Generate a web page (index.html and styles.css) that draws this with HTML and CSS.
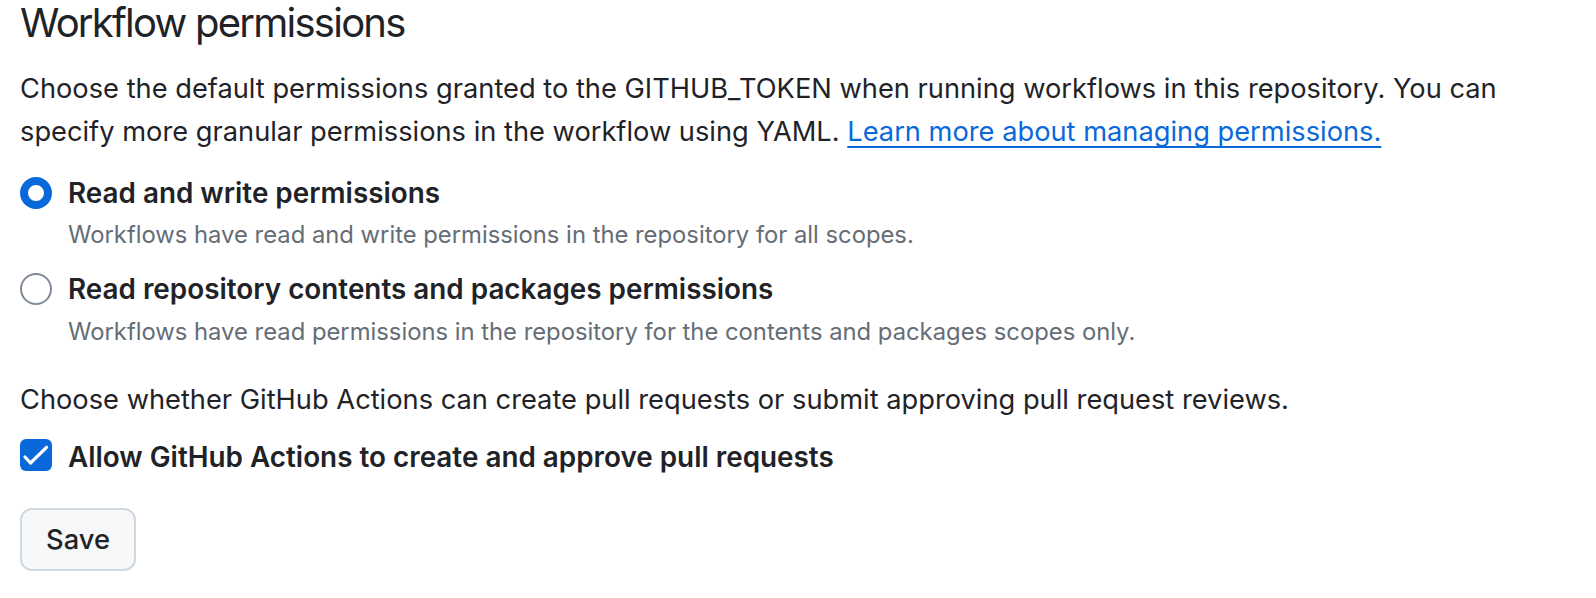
FILE: index.html
```html
<!DOCTYPE html>
<html lang="en">
<head>
<meta charset="utf-8">
<title>Workflow permissions</title>
<link rel="stylesheet" href="styles.css">
</head>
<body>
<main class="settings">
  <h2 class="heading">Workflow permissions</h2>
  <p class="lead">Choose the default permissions granted to the GITHUB_TOKEN when running workflows in this repository. You can specify more granular permissions in the workflow using YAML. <a class="link" href="#">Learn more about managing permissions.</a></p>

  <div class="choices">
    <label class="choice">
      <span class="radio radio-checked"></span>
      <span class="choice-body">
        <span class="choice-title">Read and write permissions</span>
        <span class="choice-note">Workflows have read and write permissions in the repository for all scopes.</span>
      </span>
    </label>
    <label class="choice">
      <span class="radio"></span>
      <span class="choice-body">
        <span class="choice-title">Read repository contents and packages permissions</span>
        <span class="choice-note">Workflows have read permissions in the repository for the contents and packages scopes only.</span>
      </span>
    </label>
  </div>

  <p class="lead second">Choose whether GitHub Actions can create pull requests or submit approving pull request reviews.</p>

  <label class="check-row">
    <span class="checkbox">
      <svg viewBox="0 0 32 32" width="32" height="32" aria-hidden="true"><path d="M5 18 L10.5 24 L26.5 8.3" fill="none" stroke="#ffffff" stroke-width="3.2" stroke-linecap="round" stroke-linejoin="round"/></svg>
    </span>
    <span class="choice-title">Allow GitHub Actions to create and approve pull requests</span>
  </label>

  <button class="btn" type="button">Save</button>
</main>
</body>
</html>
```
FILE: styles.css
```css
html, body {
  margin: 0;
  padding: 0;
  background: #ffffff;
}

body {
  font-family: Inter, "Liberation Sans", sans-serif;
  color: #1f2328;
}

.settings {
  padding: 0 20px;
  display: flex;
  flex-direction: column;
  align-items: flex-start;
}

.heading {
  margin: 0;
  font-size: 40px;
  font-weight: 400;
  line-height: 45px;
  letter-spacing: -1.75px;
  color: #1f2328;
}

.lead {
  margin: 23px 0 0;
  font-size: 27.25px;
  line-height: 42.5px;
  color: #1f2328;
}

.lead.second {
  margin-top: 29.5px;
  line-height: 42px;
}

.link {
  color: #0969da;
  text-decoration: underline;
  text-decoration-thickness: 2px;
  text-underline-offset: 4.5px;
  text-decoration-skip-ink: none;
}

.choices {
  margin-top: 18.5px;
  display: flex;
  flex-direction: column;
  gap: 14.5px;
}

.choice {
  display: flex;
  align-items: flex-start;
  gap: 16px;
}

.radio {
  flex: none;
  box-sizing: border-box;
  width: 32px;
  height: 32px;
  margin-top: 5px;
  border-radius: 50%;
  border: 2px solid #818b98;
  background: #ffffff;
}

.radio-checked {
  border: 8px solid #0969da;
}

.choice-body {
  display: flex;
  flex-direction: column;
}

.choice-title {
  font-size: 27.85px;
  line-height: 42px;
  font-weight: 600;
  color: #1f2328;
}

.choice-note {
  margin-top: 3.8px;
  font-size: 23.8px;
  line-height: 36px;
  color: #656d76;
}

.check-row {
  margin-top: 14.7px;
  display: flex;
  align-items: flex-start;
  gap: 16px;
}

.checkbox {
  flex: none;
  width: 32px;
  height: 32px;
  margin-top: 3.5px;
  border-radius: 6px;
  background: #0969da;
  display: flex;
}

.btn {
  margin-top: 30.3px;
  box-sizing: border-box;
  width: 116px;
  height: 63px;
  padding: 0 24px;
  border: 2px solid #d1d9e0;
  border-radius: 12px;
  background: #f6f8fa;
  color: #1f2328;
  font-family: Inter, "Liberation Sans", sans-serif;
  font-size: 27.3px;
  font-weight: 500;
  line-height: 40px;
}
```
